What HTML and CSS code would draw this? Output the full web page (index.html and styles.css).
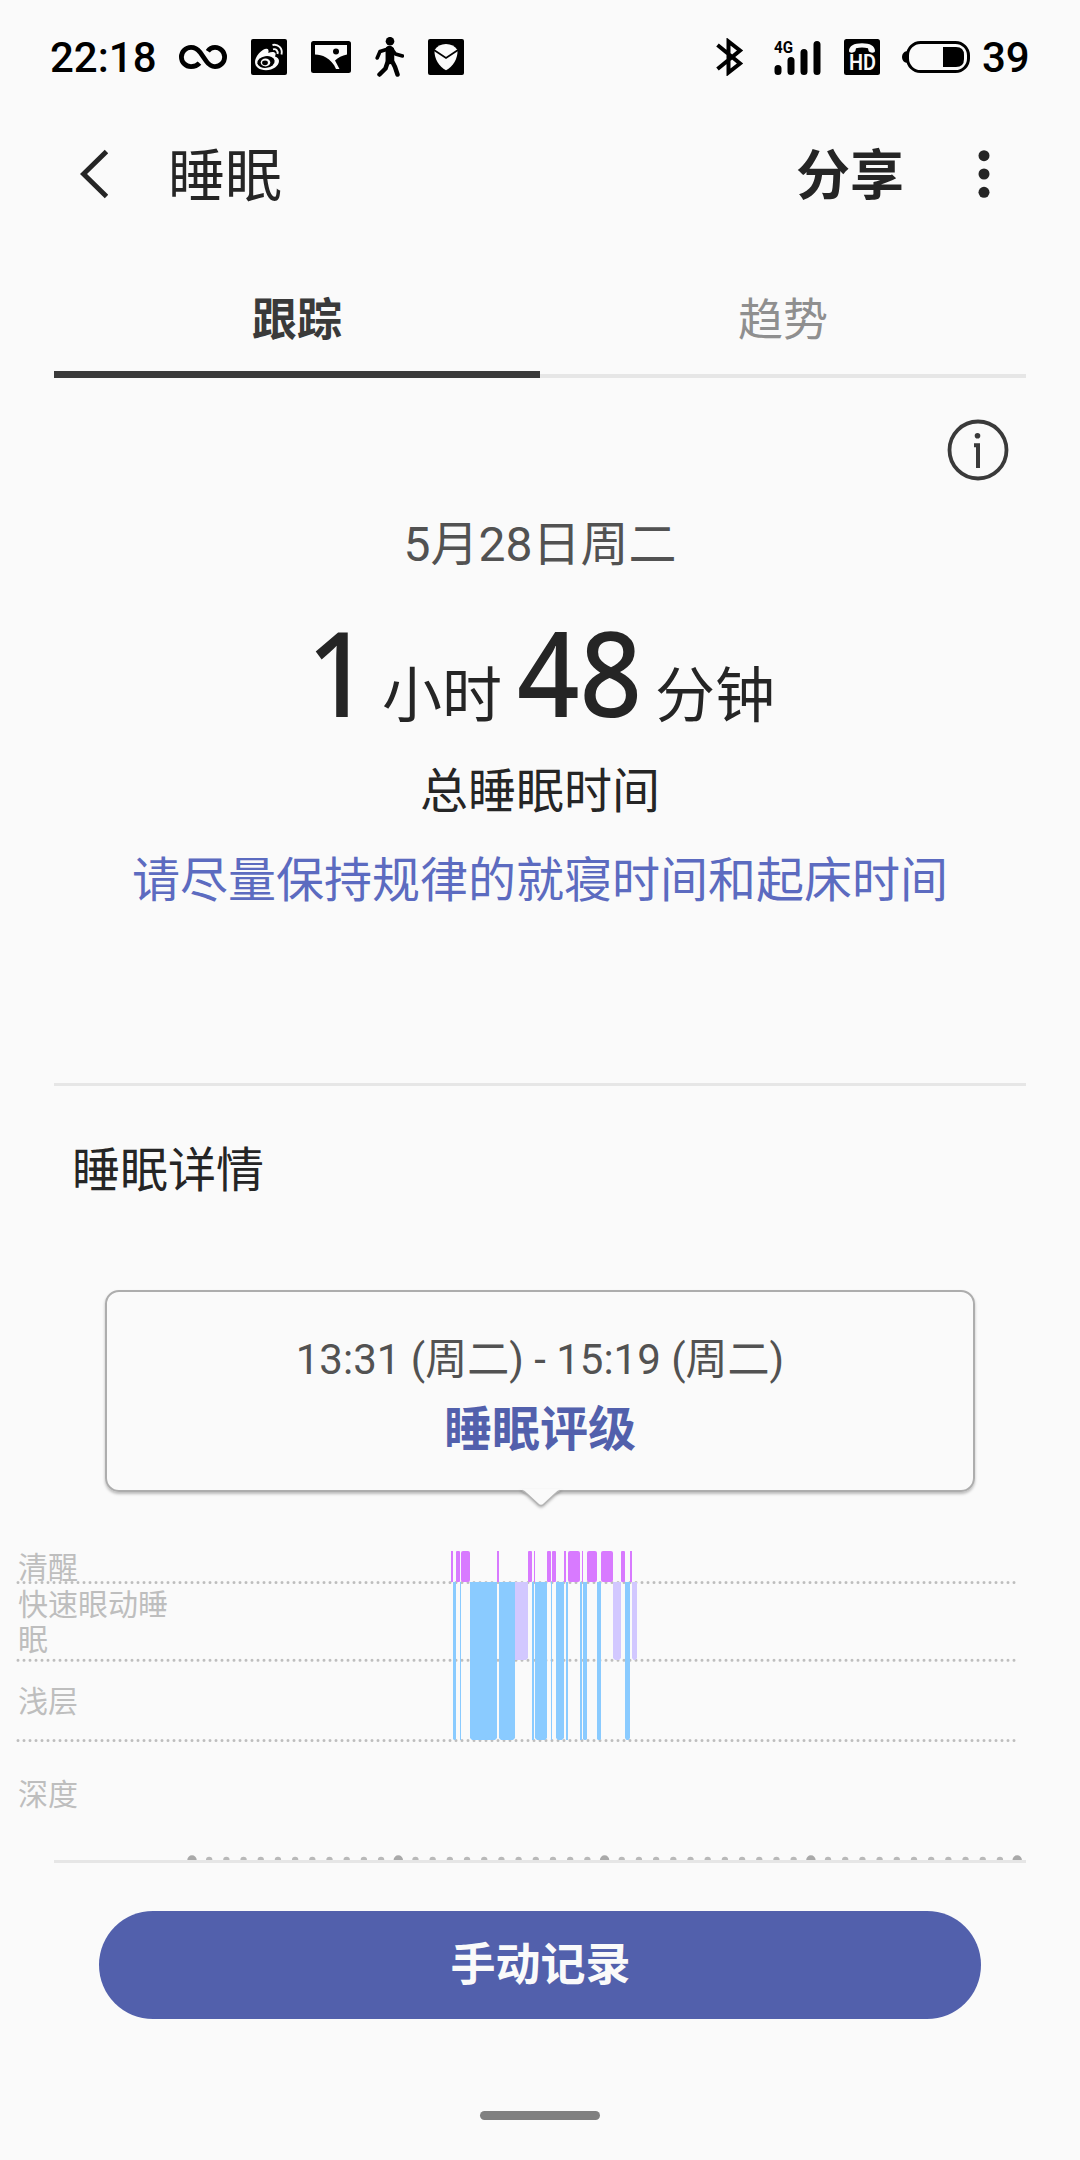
FILE: index.html
```html
<!DOCTYPE html>
<html lang="zh-CN">
  <head>
    <meta charset="UTF-8" />
    <meta name="viewport" content="width=device-width, initial-scale=1" />
    <title>睡眠</title>
    <link rel="stylesheet" href="styles.css">
  </head>
  <body>
    <div class="status-bar">
      <span class="clock">22:18</span>
      <div class="status-left">
        <svg width="48" height="24" viewBox="0 0 48 24" fill="none" stroke="#000" stroke-width="4.8">
          <path d="M20.5 18.2C18.5 20.4 15.500 21.600 12 21.600A9.600 9.600 0 0 1 12 2.400C16 2.400 18.500 4 21 7.200L27.500 16.500C30 20 32.500 21.600 36 21.600A9.600 9.600 0 0 0 36 2.400C33 2.400 30.500 3.600 28.800 6.200" />
        </svg>
        <svg width="36" height="36" viewBox="0 0 36 36">
          <rect width="36" height="36" rx="2" />
          <path fill="#fafafa" d="M4 23C4 18 10 10.500 15 9.700C17.500 9.400 18 11.500 17.300 14C20 12.500 24 12.500 24.500 14.500C24.800 15.500 24.300 16.500 24 17.500C26.500 18.200 28 19.700 28 22C28 27 22 31.200 15 31.200C8.500 31.200 4 28 4 23Z" />
          <ellipse cx="15" cy="23" rx="8.700" ry="5.900" transform="rotate(-8 15 23)" />
          <ellipse cx="14.500" cy="23.500" rx="4.800" ry="3.900" fill="#fafafa" />
          <ellipse cx="14" cy="23.800" rx="2.900" ry="2.400" />
          <path fill="none" stroke="#fafafa" stroke-width="1.900" d="M21.500 6C27 4.500 32 9.500 30.500 15.500M22 10.300C25 9.500 27.300 12 26.500 15" />
        </svg>
        <svg width="40" height="32" viewBox="0 0 40 32">
          <rect width="40" height="32" rx="2.500" />
          <path fill="#fafafa" d="M4 4H36V13.500C31 14.500 27 16.500 24 19.500L28.500 28H25C23 22.500 19 19 15 16.500C11 14.200 8 13.500 4 13.500Z" />
          <circle cx="25" cy="10.500" r="3" />
        </svg>
        <svg width="29" height="40" viewBox="0 0 29 40" fill="none" stroke="#000" stroke-linecap="round" stroke-linejoin="round">
          <circle cx="15" cy="4.200" r="4.300" fill="#000" stroke="none" />
          <path d="M13 12L5 14.500L2.200 21M17 12.500L20.500 17L27.500 19" stroke-width="3.600" />
          <path d="M13 12V24L10.500 31.500L4.500 37.500M17 12.500V24L20 30L22.500 37.500" stroke-width="4.500" />
          <path d="M14.500 12.500V23.500" stroke-width="7.500" />
        </svg>
        <svg width="36" height="36" viewBox="0 0 36 36">
          <rect width="36" height="36" rx="2" />
          <path fill="#fafafa" d="M6.500 11C9 7 13 5 18 5S27 7 29.500 11C30 19.500 25 27.500 18 31.300C11 27.500 6 19.500 6.500 11Z" />
          <path fill="none" stroke="#000" stroke-width="1.800" d="M6 11L18 19L30 11" />
        </svg>
      </div>
      <div class="status-right">
        <svg width="28" height="38" viewBox="0 0 28 38" fill="none" stroke="#000" stroke-width="4">
          <path d="M1.500 7L24 25.500L12.500 34.500V3.500L24 12.500L1.500 31" />
        </svg>
        <svg class="signal" width="48" height="38" viewBox="0 0 48 38">
          <text x="0" y="15" textLength="19" lengthAdjust="spacingAndGlyphs">4G</text>
          <path stroke="#000" stroke-width="7" stroke-linecap="round" d="M4 30.500V33.500M17 22.500V33.500M30 14.500V33.500M43 6.500V33.500" />
        </svg>
        <svg class="hd" width="36" height="36" viewBox="0 0 36 36">
          <rect width="36" height="36" rx="2.500" />
          <path fill="#fafafa" d="M5 12C5 7 10 4.300 18 4.300S31 7 31 12C31 14.500 25 14 24.500 11.500L24 9.300C20 8.300 16 8.300 12 9.300L11.500 11.500C11 14 5 14.500 5 12Z" />
          <text x="5" y="31" textLength="27" lengthAdjust="spacingAndGlyphs">HD</text>
        </svg>
        <svg width="68" height="32" viewBox="0 0 68 32">
          <path d="M6 10C2 10 0 13 0 16S2 22 6 22Z" />
          <rect x="5.500" y="1.500" width="61" height="29" rx="13" fill="#fafafa" stroke="#000" stroke-width="3" />
          <path d="M41 6H54Q62 6 62 14V18Q62 26 54 26H41Z" />
        </svg>
      </div>
      <span class="battery-level">39</span>
    </div>

    <header class="app-bar">
      <svg class="back" width="28" height="50" viewBox="0 0 28 50" fill="none" stroke="#252525" stroke-width="5">
        <path d="M26.500 2.500L3.500 25L26.500 47.500" />
      </svg>
      <h1>睡眠</h1>
      <span class="share">分享</span>
      <svg width="12" height="50" viewBox="0 0 12 50" fill="#252525">
        <circle cx="6" cy="6.700" r="5.500" />
        <circle cx="6" cy="25" r="5.500" />
        <circle cx="6" cy="43.300" r="5.500" />
      </svg>
    </header>

    <nav class="tabs">
      <div class="tab active">跟踪</div>
      <div class="tab">趋势</div>
    </nav>

    <section class="summary">
      <svg class="info" width="62" height="62" viewBox="0 0 62 62">
        <circle cx="31" cy="31" r="28.500" fill="none" stroke="#3a3a3a" stroke-width="3.800" />
        <circle cx="30.500" cy="16.700" r="2.800" fill="#3a3a3a" />
        <path d="M27 24.300H33V49H29V28.300H27Z" fill="#3a3a3a" />
      </svg>
      <p class="date">5月28日周二</p>
      <p class="duration">
        <span class="num hours">1</span><span class="unit">小时</span><span class="num minutes">48</span><span class="unit">分钟</span>
      </p>
      <p class="total">总睡眠时间</p>
      <p class="tip">请尽量保持规律的就寝时间和起床时间</p>
    </section>

    <section class="details">
      <h2>睡眠详情</h2>
      <div class="rating">
        <p class="range">13:31 (周二) - 15:19 (周二)</p>
        <p class="grade">睡眠评级</p>
        <svg class="arrow" width="44" height="22" viewBox="0 0 44 22">
          <path class="arrow-fill" d="M1 0H43L39 2.500L24.500 15.500Q22 17.500 19.500 15.500L5 2.500Z" />
          <path class="arrow-line" d="M3 1.500Q5 2 7 4L19.500 15.500Q22 17.500 24.500 15.500L37 4Q39 2 41 1.500" />
        </svg>
      </div>

      <svg class="chart" width="1080" height="320" viewBox="0 1540 1080 320">
        <g class="labels">
          <text x="18" y="1578">清醒</text>
          <text x="18" y="1615">快速眼动睡</text>
          <text x="18" y="1650">眠</text>
          <text x="18" y="1712">浅层</text>
          <text x="18" y="1805">深度</text>
        </g>
        <path class="grid" d="M18 1582.500H1015M18 1660.200H1015M18 1740.500H1015" />
        <!-- awake -->
        <g fill="#d87aff">
          <rect x="451" y="1551" width="2" height="31" />
          <rect x="456" y="1551" width="4" height="31" rx="1" />
          <rect x="461" y="1551" width="9" height="31" rx="2" />
          <rect x="497" y="1551" width="2" height="31" />
          <rect x="528" y="1551" width="4" height="31" rx="1" />
          <rect x="534" y="1551" width="1" height="31" />
          <rect x="547" y="1551" width="4" height="31" rx="1" />
          <rect x="552" y="1551" width="4" height="31" rx="1" />
          <rect x="564" y="1551" width="2" height="31" />
          <rect x="568" y="1551" width="12" height="31" rx="2" />
          <rect x="582" y="1551" width="1" height="31" />
          <rect x="587" y="1551" width="10" height="31" rx="2" />
          <rect x="601" y="1551" width="12" height="31" rx="2" />
          <rect x="621" y="1551" width="4" height="31" rx="1" />
          <rect x="630" y="1551" width="2" height="31" />
        </g>
        <!-- REM -->
        <g fill="#d2c8ff">
          <path d="M515 1582H528V1658L526 1660H515Z" />
          <path d="M613 1582H621V1658L619 1660H615L613 1658Z" />
          <path d="M632 1582H637V1658L635.500 1660H633.500L632 1658Z" />
        </g>
        <!-- light -->
        <g fill="#8acbff">
          <path d="M453 1582H456V1739L455 1740H454L453 1739Z" />
          <rect x="460" y="1582" width="1" height="158" />
          <path d="M470 1582H497V1738L495 1740H472L470 1738Z" />
          <path d="M499 1582H515V1738L513 1740H501L499 1738Z" />
          <rect x="532" y="1582" width="2" height="158" />
          <path d="M535 1582H547V1738L545 1740H537L535 1738Z" />
          <rect x="551" y="1582" width="1" height="158" />
          <path d="M556 1582H564V1738L562 1740H558L556 1738Z" />
          <rect x="566" y="1582" width="2" height="158" />
          <rect x="580" y="1582" width="2" height="158" />
          <path d="M583 1582H587V1739L586 1740H584L583 1739Z" />
          <path d="M597 1582H601V1739L600 1740H598L597 1739Z" />
          <path d="M625 1582H630V1738L628.500 1740H626.500L625 1738Z" />
        </g>
        <path class="ticks" d="M192 1860H1018" />
        <path class="ticks-hour" d="M192 1860H1018" />
      </svg>
    </section>

    <footer class="bottom">
      <button class="record">手动记录</button>
      <div class="home-handle"></div>
    </footer>
  </body>
</html>
```
FILE: styles.css
```css
* {
  box-sizing: border-box;
}

body {
  display: flex;
  flex-direction: column;
  width: 1080px;
  height: 2160px;
  margin: 0;
  overflow: hidden;
  background: #fafafa;
  color: #252525;
  font-family: Roboto, "Noto Sans CJK SC", sans-serif;
}

h1,
h2,
p {
  margin: 0;
  font-weight: 400;
}

svg {
  display: block;
  flex: none;
}

/* status bar */
.status-bar {
  display: flex;
  align-items: center;
  height: 114px;
  padding: 0 50px;
  color: #000;
  font-size: 42px;
  font-weight: 500;
  line-height: 50px;
}

.clock {
  width: 129px;
  padding-top: 2px;
}

.status-left {
  display: flex;
  align-items: center;
  gap: 24px;
}

.status-right {
  display: flex;
  align-items: center;
  margin-left: auto;
}

.signal {
  margin-left: 30px;
}

.signal text {
  font-size: 17px;
  font-weight: 700;
}

.hd {
  margin: 0 22px 0 22px;
}

.hd text {
  fill: #fafafa;
  font-size: 22px;
  font-weight: 600;
}

.battery-level {
  width: 48px;
  margin-left: 12px;
  padding-top: 2px;
}

/* app bar */
.app-bar {
  display: flex;
  align-items: center;
  height: 120px;
  padding: 0 90px 0 80px;
}

.app-bar h1 {
  margin-left: 60px;
  padding-top: 6px;
  font-size: 57px;
  line-height: 66px;
}

.share {
  margin: 0 74px 0 auto;
  padding-top: 6px;
  font-size: 54px;
  font-weight: 700;
  line-height: 64px;
}

/* tabs */
.tabs {
  display: flex;
  height: 144px;
  margin: 0 54px;
}

.tab {
  flex: 1;
  padding-top: 57px;
  border-bottom: 4px solid #e6e6e6;
  color: #8f8f8f;
  font-size: 45px;
  line-height: 60px;
  text-align: center;
}

.tab.active {
  border-bottom: 7px solid #3a3a3a;
  color: #3a3a3a;
  font-weight: 700;
}

/* summary */
.summary {
  display: flex;
  flex-direction: column;
  align-items: center;
  height: 708px;
  margin: 0 54px;
  padding-top: 41px;
  border-bottom: 3px solid #e6e6e6;
}

.info {
  align-self: flex-end;
  margin-right: 17px;
}

.date {
  margin-top: 34px;
  color: #525252;
  font-size: 48px;
  line-height: 60px;
}

.duration {
  display: flex;
  align-items: baseline;
  margin: 26px 0 0 2px;
  line-height: 140px;
}

/* slightly condensed digits */
.num {
  font-family: "Noto Sans", sans-serif;
  font-size: 119px;
  font-weight: 500;
  transform: scaleX(0.92);
  transform-origin: left;
}

.hours {
  margin-right: 7px;
}

.minutes {
  margin: 0 2px 0 15px;
}

.unit {
  font-size: 60px;
}

.total {
  margin-top: -5px;
  font-size: 48px;
  line-height: 60px;
}

.tip {
  margin-top: 29px;
  color: #5c6bc0;
  font-size: 48px;
  line-height: 60px;
}

/* details */
.details {
  height: 777px;
  border-bottom: 3px solid #e6e6e6;
  margin: 0 54px;
}

.details h2 {
  padding: 55px 18px 0;
  font-size: 48px;
  line-height: 60px;
}

.rating {
  position: relative;
  width: 870px;
  height: 202px;
  margin: 89px 0 0 51px;
  padding-top: 38px;
  border: 2px solid #adadad;
  border-radius: 14px;
  box-shadow: 0 2px 3px rgba(0, 0, 0, 0.25);
  text-align: center;
}

.range {
  color: #525252;
  font-size: 42px;
  line-height: 60px;
}

.grade {
  margin-top: 10px;
  color: #5260ac;
  font-size: 48px;
  font-weight: 700;
  line-height: 60px;
}

/* pointer of the rating bubble, covers its bottom border */
.arrow {
  position: absolute;
  left: 412px;
  top: 197px;
  overflow: visible;
}

.arrow-fill {
  fill: #fafafa;
  filter: drop-shadow(0 2px 1.5px rgba(0, 0, 0, 0.3));
}

.arrow-line {
  fill: none;
  stroke: #b4b4b4;
  stroke-width: 1.5;
}

.chart {
  margin: 48px 0 0 -54px;
}

.labels {
  fill: #bebebe;
  font-size: 30px;
}

.grid {
  stroke: #bebebe;
  stroke-width: 3;
  stroke-linecap: round;
  stroke-dasharray: 0 6;
}

.ticks,
.ticks-hour {
  stroke: #b9b9b9;
  stroke-width: 6.4;
  stroke-linecap: round;
  stroke-dasharray: 0 17.19;
}

.ticks-hour {
  stroke: #a9a9a9;
  stroke-width: 9.4;
  stroke-dasharray: 0 206.3;
}

/* bottom */
.bottom {
  display: flex;
  flex-direction: column;
  align-items: center;
  padding-top: 48px;
}

.record {
  width: 882px;
  height: 108px;
  padding: 1px 0 0 1px;
  border: 0;
  border-radius: 54px;
  background: #5260ac;
  color: #fafafa;
  font-family: inherit;
  font-size: 45px;
  font-weight: 700;
  line-height: 60px;
}

.home-handle {
  width: 120px;
  height: 9px;
  margin-top: 92px;
  border-radius: 5px;
  background: #808080;
}
```
